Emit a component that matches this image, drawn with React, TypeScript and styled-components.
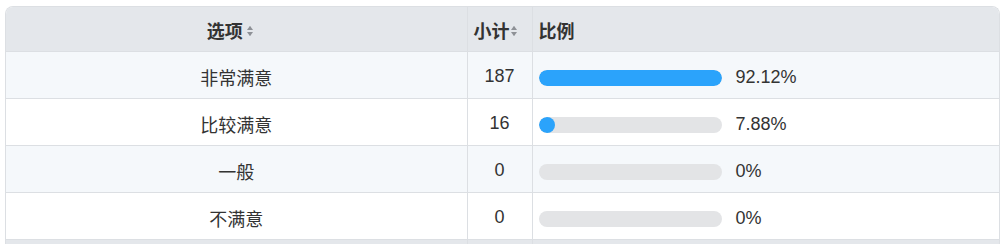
import React from "react";
import styled, { createGlobalStyle } from "styled-components";

type Answer = { label: string; count: number; percent: number };

const answers: Answer[] = [
  { label: "非常满意", count: 187, percent: 92.12 },
  { label: "比较满意", count: 16, percent: 7.88 },
  { label: "一般", count: 0, percent: 0 },
  { label: "不满意", count: 0, percent: 0 },
];

const GlobalStyle = createGlobalStyle`
  html, body {
    margin: 0;
    padding: 0;
    background: #ffffff;
    font-family: "Liberation Sans", "Noto Sans CJK SC", sans-serif;
    color: #333333;
  }
`;

const SortIcon: React.FC = () => (
  <SortMark viewBox="0 0 6 12" width="6" height="12">
    <path d="M3 0.8 L6 5 L0 5 Z" fill="#8e9196" />
    <path d="M3 11.2 L6 7 L0 7 Z" fill="#8e9196" />
  </SortMark>
);

const App: React.FC = () => {
  const max = Math.max(...answers.map((a) => a.percent));

  return (
    <StyledView>
      <GlobalStyle />
      <TableBox>
        <Table>
          <colgroup>
            <col style={{ width: 461 }} />
            <col style={{ width: 65 }} />
            <col />
          </colgroup>
          <thead>
            <tr>
              <HeadCell $align="center" $padRight={19}>
                <HeadInner $gap={4}>
                  选项
                  <SortIcon />
                </HeadInner>
              </HeadCell>
              <HeadCell>
                <HeadInner $gap={1}>
                  小计
                  <SortIcon />
                </HeadInner>
              </HeadCell>
              <HeadCell>比例</HeadCell>
            </tr>
          </thead>
          <tbody>
            {answers.map((a, i) => (
              <Row key={a.label} $striped={i % 2 === 0}>
                <Cell $align="center">{a.label}</Cell>
                <Cell $align="center">{a.count}</Cell>
                <Cell>
                  <Ratio>
                    <Track>
                      {a.percent > 0 && (
                        <Fill style={{ width: `${(a.percent / max) * 100}%` }} />
                      )}
                    </Track>
                    <Percent>{a.percent}%</Percent>
                  </Ratio>
                </Cell>
              </Row>
            ))}
          </tbody>
          <tfoot>
            <tr>
              <FootCell />
              <FootCell />
              <FootCell />
            </tr>
          </tfoot>
        </Table>
      </TableBox>
    </StyledView>
  );
};

const StyledView = styled.div`
  padding: 6px 6px 0 5px;
  width: 995px;
`;

const TableBox = styled.div`
  border: 1px solid #dcdfe3;
  border-bottom: none;
  border-radius: 8px 8px 0 0;
  overflow: hidden;
`;

const Table = styled.table`
  width: 100%;
  border-collapse: collapse;
  table-layout: fixed;
  font-size: 18px;
`;

const HeadCell = styled.th<{ $align?: "center" | "left"; $padRight?: number }>`
  height: 42px;
  padding: 2px ${(p) => p.$padRight ?? 6}px 0 6px;
  background: #e4e7eb;
  font-weight: bold;
  color: #333333;
  text-align: ${(p) => p.$align ?? "left"};
  border-left: 1px solid #dcdfe3;
  border-bottom: 1px solid #dcdfe3;
  &:first-child {
    border-left: none;
  }
`;

const HeadInner = styled.span<{ $gap: number }>`
  display: inline-flex;
  align-items: center;
  gap: ${(p) => p.$gap}px;
`;

const SortMark = styled.svg`
  display: block;
  margin-top: 2px;
`;

const Row = styled.tr<{ $striped: boolean }>`
  background: ${(p) => (p.$striped ? "#f5f8fb" : "#ffffff")};
`;

const Cell = styled.td<{ $align?: "center" | "left" }>`
  height: 43px;
  padding: 3px 6px 0 6px;
  text-align: ${(p) => p.$align ?? "left"};
  color: #333333;
  border-left: 1px solid #dcdfe3;
  border-bottom: 1px solid #dcdfe3;
  &:first-child {
    border-left: none;
  }
`;

const Ratio = styled.div`
  display: flex;
  align-items: center;
  gap: 14px;
  padding-top: 2px;
`;

const Track = styled.div`
  width: 183px;
  height: 16px;
  border-radius: 8px;
  background: #e3e4e6;
  overflow: hidden;
`;

const Fill = styled.div`
  height: 100%;
  min-width: 16px;
  border-radius: 8px;
  background: #2ba3fb;
`;

const Percent = styled.span`
  font-size: 18px;
`;

const FootCell = styled.td`
  height: 40px;
  background: #e4e7eb;
  border-left: 1px solid #dcdfe3;
  &:first-child {
    border-left: none;
  }
`;

export default App;
